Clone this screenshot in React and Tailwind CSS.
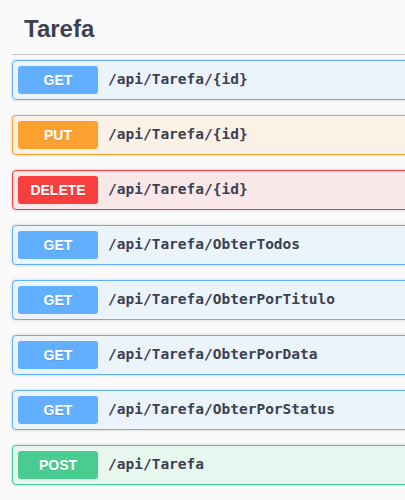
import React from 'react';

const METHOD_STYLES = {
  GET: { block: 'border-[#61affe] bg-[#ebf3fb]', badge: 'bg-[#61affe]' },
  PUT: { block: 'border-[#fca130] bg-[#fbf1e6]', badge: 'bg-[#fca130]' },
  DELETE: { block: 'border-[#f93e3e] bg-[#fae7e7]', badge: 'bg-[#f93e3e]' },
  POST: { block: 'border-[#49cc90] bg-[#e8f6f0]', badge: 'bg-[#49cc90]' },
};

const endpoints = [
  { method: 'GET', path: '/api/Tarefa/{id}' },
  { method: 'PUT', path: '/api/Tarefa/{id}' },
  { method: 'DELETE', path: '/api/Tarefa/{id}' },
  { method: 'GET', path: '/api/Tarefa/ObterTodos' },
  { method: 'GET', path: '/api/Tarefa/ObterPorTitulo' },
  { method: 'GET', path: '/api/Tarefa/ObterPorData' },
  { method: 'GET', path: '/api/Tarefa/ObterPorStatus' },
  { method: 'POST', path: '/api/Tarefa' },
];

function Operation({ method, path }) {
  const styles = METHOD_STYLES[method];
  return (
    <div
      className={`flex items-center w-[420px] h-[40px] px-[5px] border rounded-[4px] shadow-[0_0_3px_rgba(0,0,0,0.19)] ${styles.block}`}
    >
      <span
        className={`flex items-center justify-center w-[80px] h-[28px] rounded-[3px] text-white text-[14px] font-bold [text-shadow:0_1px_0_rgba(0,0,0,0.1)] ${styles.badge}`}
        style={{ fontFamily: '"Liberation Sans", Arial, sans-serif' }}
      >
        {method}
      </span>
      <span
        className="px-[10px] text-[14.5px] font-bold text-[#3b4151]"
        style={{ fontFamily: '"DejaVu Sans Mono", monospace' }}
      >
        {path}
      </span>
    </div>
  );
}

export default function App() {
  return (
    <div className="w-[405px] h-[500px] overflow-hidden bg-[#fafafa]">
      <div className="pl-[12px]">
        {/* Tag header */}
        <h3
          className="pt-[15px] pb-[11px] pl-[12px] text-[24px] leading-[28px] font-bold text-[#3b4151] border-b border-[#c4c5c9] mb-[5px]"
          style={{ fontFamily: '"Liberation Sans", Arial, sans-serif' }}
        >
          Tarefa
        </h3>

        {/* Operations */}
        <div className="flex flex-col gap-[15px]">
          {endpoints.map((ep, i) => (
            <Operation key={i} method={ep.method} path={ep.path} />
          ))}
        </div>
      </div>
    </div>
  );
}
